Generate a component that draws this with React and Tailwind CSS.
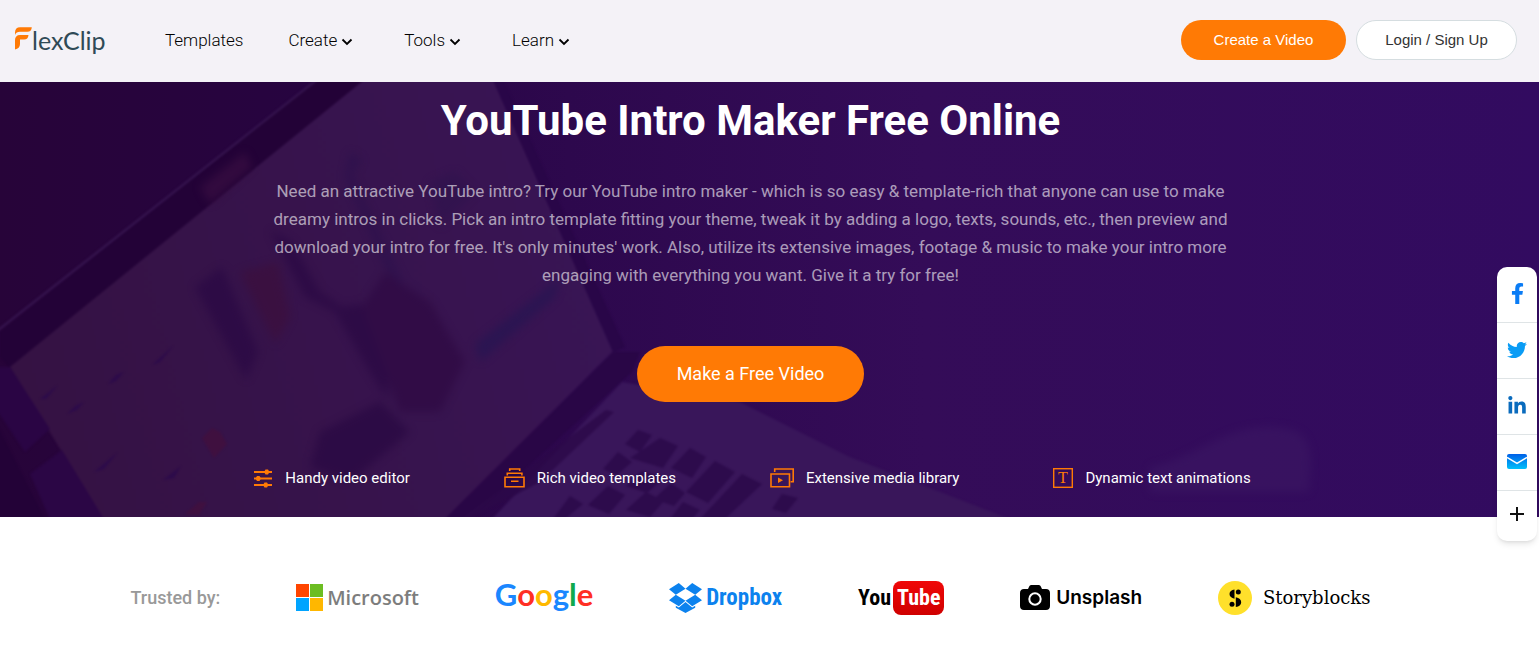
import React from "react";
import { FaFacebookF, FaTwitter, FaLinkedinIn } from "react-icons/fa";

const ORANGE = "#ff7a05";

function Chevron() {
  return (
    <svg className="mt-1 h-3 w-3" viewBox="0 0 12 12" fill="none" stroke="#000" strokeWidth="1.8" aria-hidden="true">
      <path d="M1.500 3.500 6 8l4.500-4.500" />
    </svg>
  );
}

function FlexClipLogo() {
  return (
    <a href="#home" aria-label="FlexClip" className="flex w-[92px] items-start">
      <svg className="mt-[3px] h-[23px] w-[18px] shrink-0" viewBox="0 0 18 23" fill={ORANGE} aria-hidden="true">
        <path d="M1 8V5.500C1 2 3 .3 6 .3h11.800c-.2 3-1.700 4.500-4.500 4.500H6C3.500 4.800 1.800 5.800 1 8z" />
        <path d="M1 22.500V13c0-3 1.800-5 5-5h8.500c-.3 3-1.700 4.500-4.500 4.500H6V17c0 3-2 5-5 5.500z" />
      </svg>
      <span className="font-['Lato',sans-serif] text-[25px] leading-8 text-[#2f4a56]">lexClip</span>
    </a>
  );
}

const menu = ["Create", "Tools", "Learn"];

function Header() {
  return (
    <header className="flex h-[82px] items-center bg-[#f4f2f7] pr-[22px] pb-[2px] pl-[14px]">
      <FlexClipLogo />
      <nav className="ml-[59px] flex items-center gap-[45px] text-[17px] leading-6 font-light text-black">
        <a href="#templates">Templates</a>
        {menu.map((label) => (
          <button key={label} type="button" className="flex items-center gap-1 pr-[6px]">
            {label}
            <Chevron />
          </button>
        ))}
      </nav>
      <div className="ml-auto flex gap-[10px] font-['Liberation_Sans',Arial,sans-serif] text-[15px]">
        <button type="button" className="h-10 w-[165px] rounded-full bg-[#ff7a05] text-white">Create a Video</button>
        <button type="button" className="h-10 w-[161px] rounded-full border border-[#d5dde0] bg-white text-[#333]">
          Login / Sign Up
        </button>
      </div>
    </header>
  );
}

function HeroBackdrop() {
  return (
    <svg
      className="absolute inset-0 h-full w-full"
      viewBox="0 0 1539 435"
      preserveAspectRatio="xMidYMid slice"
      aria-hidden="true"
    >
      <defs>
        <linearGradient id="base" x1="0" x2="1" y1="0" y2="0">
          <stop offset="0" stopColor="#270439" />
          <stop offset=".2" stopColor="#270440" />
          <stop offset=".37" stopColor="#2d084d" />
          <stop offset=".6" stopColor="#340c58" />
          <stop offset="1" stopColor="#320b60" />
        </linearGradient>
        <linearGradient id="screen" gradientUnits="userSpaceOnUse" x1="10" x2="600" y1="300" y2="150">
          <stop offset="0" stopColor="#351243" />
          <stop offset="1" stopColor="#391555" />
        </linearGradient>
        <filter id="soft" colorInterpolationFilters="sRGB">
          <feGaussianBlur stdDeviation="1" />
        </filter>
        <filter id="haze" colorInterpolationFilters="sRGB">
          <feGaussianBlur stdDeviation="4" />
        </filter>
      </defs>
      <rect width="1539" height="435" fill="url(#base)" />
      <g filter="url(#soft)">
        <path d="M318-3 0 250V275L10 286 370-3z" fill="#230237" />
        <path d="M318-3-3 249" stroke="#371650" strokeWidth="2" />
        <path d="M364-2H493L613 269 445 437H103L10 285z" fill="url(#screen)" />
        <path d="M-2 285 10 285 50 347 25 370-2 330z" fill="#2a0544" />
        <path d="M-2 345 45 437H-2z" fill="#230237" />
        <path d="M62 368 104 437H50L30 392z" fill="#2b0645" />
        <path d="M493-2 503-2 625 265 613 270z" fill="#290648" />
        <path d="M622 300 740 320 850 375 1010 437H492z" fill="#39165a" />
        <path d="M613 270 445 437H470L632 290 640 270z" fill="#290646" />
        <path d="M606 328 614 330 540 400 470 437H460z" fill="#2c0948" opacity=".8" />
      </g>
      <g filter="url(#haze)" opacity=".85">
        <path d="M195 205 222 185 258 270 246 298zM270 148 292 160 320 210 342 225 362 222 388 265 388 318 370 290 335 230 305 215z" fill="#2c0a45" />
        <path d="M362 225 385 190 430 220 465 280 440 330 400 330z" fill="#300b45" />
        <path d="M320 350 380 320 410 350 350 400 310 385z" fill="#2b0a44" />
        <path d="M475 262 545 208 560 195 555 215 480 280z" fill="#291552" />
        <path d="M240 190 278 180 290 235 275 262z" fill="#3b103f" />
        <path d="M350 70 362 78 352 92 405 205 388 190 345 95z" fill="#2e114d" />
        <path d="M430 100 455 90 475 110 440 145z" fill="#31134e" />
        <path d="M1150 385C1200 375 1220 345 1270 345S1310 375 1309 410H1150z" fill="#391461" />
        <path d="M200 105 245 70 252 85 210 122z" fill="#350c40" />
      </g>
      <g filter="url(#soft)" fill="#2c0a4b" opacity=".9">
        <path d="M638 348 652 353 640 370 625 362z" />
        <path d="M660 356 678 364 663 386 630 376z" />
        <path d="M690 366 706 375 692 396 671 386z" />
        <path d="M715 379 735 390 708 421 686 410z" />
        <path d="M742 392 762 402 725 437H700z" />
        <path d="M618 370 632 380 617 393 603 387z" />
        <path d="M642 389 664 396 647 411 626 404z" />
        <path d="M671 401 685 411 674 424 654 417z" />
        <path d="M608 404 625 413 609 432 588 423z" />
        <path d="M646 410 664 419 650 435 626 428z" />
        <path d="M683 420 700 428 692 437H670z" />
        <path d="M570 414 583 422 565 437H553z" />
        <path d="M782 412 798 416 786 431 772 427z" />
        <path d="M152 283 174 263 160 280zM108 302l8-9 8-3-8 9zM67 332l8-8 9-4-7 8zM40 317l18-14-12 14zM94 390l24-20-14 17zM163 398l18-14-7 12z" />
        <path d="M202 356l10-10 8 4 7 12-13 14z" fill="#40103f" />
        <path d="M185 432l14-12 8 0-8 13z" fill="#40103f" />
      </g>
    </svg>
  );
}

function SlidersIcon() {
  return (
    <svg className="h-5 w-[19px]" viewBox="0 0 19 20" stroke={ORANGE} strokeWidth="2" fill={ORANGE} aria-hidden="true">
      <path d="M0 4h18M0 10.500h18M0 17h18" />
      <g stroke="none">
        <path d="M10 4l1.500-2.500h2.500L15.500 4 14 6.500h-2.500z" />
        <path d="M1.500 10.500 3 8h2.500L7 10.500 5.500 13H3z" />
        <path d="M9 17l1.500-2.500H13l1.500 2.500-1.500 2.500h-2.500z" />
      </g>
    </svg>
  );
}

function TemplatesIcon() {
  return (
    <svg className="h-5 w-[21px]" viewBox="0 0 21 20" stroke={ORANGE} strokeWidth="1.600" fill="none" aria-hidden="true">
      <path d="M5.700 3V1h10v2M3.300 7.500v-2.300h14.600v2.300M1 9.300h19v9.500H1zM7 13.300h7.500" />
    </svg>
  );
}

function MediaIcon() {
  return (
    <svg className="h-5 w-6" viewBox="0 0 24 20" stroke={ORANGE} strokeWidth="1.600" fill="none" aria-hidden="true">
      <path d="M4.700 4V1h18.500v12.700h-2.500M1 6h18.500v12.700H1z" />
      <path d="M8 9.500v5.500l5-2.700z" fill={ORANGE} stroke="none" />
    </svg>
  );
}

function TextIcon() {
  return (
    <svg className="h-5 w-5" viewBox="0 0 20 20" aria-hidden="true">
      <rect x=".7" y=".7" width="18.600" height="18.600" fill="none" stroke={ORANGE} strokeWidth="1.400" />
      <text x="10" y="15" textAnchor="middle" fontFamily="Liberation Serif, serif" fontSize="16" fill={ORANGE}>T</text>
    </svg>
  );
}

const features = [
  [SlidersIcon, "Handy video editor"],
  [TemplatesIcon, "Rich video templates"],
  [MediaIcon, "Extensive media library"],
  [TextIcon, "Dynamic text animations"],
];

function Hero() {
  return (
    <section className="relative overflow-hidden bg-[#300a55]">
      <HeroBackdrop />
      <div className="relative flex flex-col items-center pt-[13px] pr-[38px] pb-[27px] text-center text-white">
        <h1 className="text-[42px] leading-[52px] font-bold">YouTube Intro Maker Free Online</h1>
        <p className="mt-[30px] max-w-[960px] text-[17px] leading-7 text-white/60">
          Need an attractive YouTube intro? Try our YouTube intro maker - which is so easy &amp; template-rich that
          anyone can use to make dreamy intros in clicks. Pick an intro template fitting your theme, tweak it by adding
          a logo, texts, sounds, etc., then preview and download your intro for free. It's only minutes' work. Also,
          utilize its extensive images, footage &amp; music to make your intro more engaging with everything you want.
          Give it a try for free!
        </p>
        <button type="button" className="mt-[57px] h-14 w-[227px] rounded-full bg-[#ff7a05] pb-[2px] text-[18px]">
          Make a Free Video
        </button>
        <ul className="mt-16 ml-1 flex gap-[94px] text-[15px] leading-6">
          {features.map(([Icon, label]) => (
            <li key={label} className="flex items-center gap-3">
              <Icon />
              {label}
            </li>
          ))}
        </ul>
      </div>
    </section>
  );
}

function Microsoft() {
  return (
    <div className="flex items-center gap-1">
      <svg className="h-[27px] w-[27px]" viewBox="0 0 27 27" aria-hidden="true">
        <path d="M0 0h13v13H0z" fill="#ff4500" />
        <path d="M14 0h13v13H14z" fill="#6cbd22" />
        <path d="M0 14h13v13H0z" fill="#00a4ff" />
        <path d="M14 14h13v13H14z" fill="#ffb700" />
      </svg>
      <span className="font-['Open_Sans',sans-serif] text-[20px] leading-7 font-semibold text-[#7d7d7d]">Microsoft</span>
    </div>
  );
}

function Google() {
  return (
    <div className="pb-2 font-['Lato',sans-serif] text-[31px] leading-8 font-bold">
      <span className="text-[#1a87ff]">G</span>
      <span className="text-[#ff2f24]">o</span>
      <span className="text-[#ffb900]">o</span>
      <span className="text-[#1a87ff]">g</span>
      <span className="text-[#0fa94e]">l</span>
      <span className="text-[#ff2f24]">e</span>
    </div>
  );
}

function Dropbox() {
  return (
    <div className="flex items-center gap-1 text-[#0c82ee]">
      <svg className="h-[30px] w-[33px]" viewBox="0 0 32 29" fill="currentColor" aria-hidden="true">
        <path d="M9.500 0 0 6l6.600 5.300L16 5.500zM22.500 0 32 6l-6.600 5.300L16 5.500zM0 16.600l9.500 6 6.500-5.500-9.400-5.800zM32 16.600l-9.500 6-6.500-5.500 9.400-5.800zM16 18.400l-6.500 5.400L6.600 22v2l9.400 5 9.400-5v-2l-2.900 1.800z" />
      </svg>
      <span className="font-['Roboto_Condensed','Liberation_Sans_Narrow',sans-serif] text-[23px] leading-7 font-bold">Dropbox</span>
    </div>
  );
}

function YouTube() {
  return (
    <div className="flex items-center gap-[2px] font-['Roboto_Condensed','Liberation_Sans_Narrow',sans-serif] text-[22px] leading-[34px] font-bold text-black">
      <span>You</span>
      <span className="rounded-[8px] bg-linear-to-b from-[#f00808] to-[#cf0000] px-1 text-white">Tube</span>
    </div>
  );
}

function Unsplash() {
  return (
    <div className="flex items-center gap-[6px] text-black">
      <svg className="h-[25px] w-[30px]" viewBox="0 0 30 25" aria-hidden="true">
        <path d="M4 4h4l1.200-2.500C9.700.5 10.500 0 11.500 0h7c1 0 1.800.5 2.300 1.500L22 4h4c2.500 0 4 1.500 4 4v13c0 2.500-1.500 4-4 4H4c-2.500 0-4-1.500-4-4V8c0-2.500 1.500-4 4-4z" />
        <circle cx="15" cy="14" r="5.700" fill="none" stroke="#fff" strokeWidth="2" />
      </svg>
      <span className="font-['Inter',sans-serif] text-[19px] leading-7 font-semibold">Unsplash</span>
    </div>
  );
}

function Storyblocks() {
  return (
    <div className="flex items-center gap-[11px] text-black">
      <svg className="h-[34px] w-[34px]" viewBox="0 0 34 34" aria-hidden="true">
        <circle cx="17" cy="17" r="17" fill="#ffe02b" />
        <path d="M16.500 8.500v9.300C13.500 17 11.500 15.500 11.500 13s2-4.300 5-4.500zM17.800 16.200c3.500.8 5.400 2.300 5.400 5s-2.100 4.500-5.400 4.700z" />
        <circle cx="20.300" cy="10.900" r="2.500" />
        <circle cx="14" cy="23.300" r="2.500" />
      </svg>
      <span className="font-['DejaVu_Serif',serif] text-[18px] leading-7">Storyblocks</span>
    </div>
  );
}

function TrustedBy() {
  return (
    <section className="bg-white pt-[63px] pr-[38px] pb-[52px]">
      <div className="mx-auto flex h-[35px] max-w-[1240px] items-center justify-between">
        <h2 className="text-[18px] leading-7 font-medium text-[#999]">Trusted by:</h2>
        <Microsoft />
        <Google />
        <Dropbox />
        <YouTube />
        <Unsplash />
        <Storyblocks />
      </div>
    </section>
  );
}

function MailIcon() {
  return (
    <svg className="h-[15px] w-5" viewBox="0 0 20 15" aria-hidden="true">
      <defs>
        <linearGradient id="mail" x1="0" x2="0" y1="0" y2="1">
          <stop offset="0" stopColor="#0060e8" />
          <stop offset="1" stopColor="#00c0fa" />
        </linearGradient>
      </defs>
      <rect width="20" height="15" rx="2" fill="url(#mail)" />
      <path d="M0 3.500 10 9.500l10-6" fill="none" stroke="#fff" strokeWidth="1.500" />
    </svg>
  );
}

function ShareBar() {
  const item = "flex h-14 w-full items-center justify-center border-b border-[#dfe4e6] pb-[2px]";
  return (
    <aside className="fixed top-[267px] right-[2px] w-10 rounded-[10px] bg-white shadow-md">
      <a href="#facebook" aria-label="Facebook" className={item}>
        <FaFacebookF className="h-[21px] w-[13px]" color="#0a7cf5" />
      </a>
      <a href="#twitter" aria-label="Twitter" className={item}>
        <FaTwitter className="h-5 w-5" color="#0a9cf5" />
      </a>
      <a href="#linkedin" aria-label="LinkedIn" className={item}>
        <FaLinkedinIn className="h-5 w-5" color="#0a6bbd" />
      </a>
      <a href="#email" aria-label="Email" className={item}>
        <MailIcon />
      </a>
      <button type="button" aria-label="More" className="flex h-[50px] w-full items-center justify-center pb-1">
        <svg className="h-[14px] w-[14px]" viewBox="0 0 14 14" stroke="#111" strokeWidth="2" aria-hidden="true">
          <path d="M7 0v14M0 7h14" />
        </svg>
      </button>
    </aside>
  );
}

export default function App() {
  return (
    <div className="min-h-screen bg-white font-['Roboto',sans-serif]">
      <Header />
      <main>
        <Hero />
        <TrustedBy />
      </main>
      <ShareBar />
    </div>
  );
}
